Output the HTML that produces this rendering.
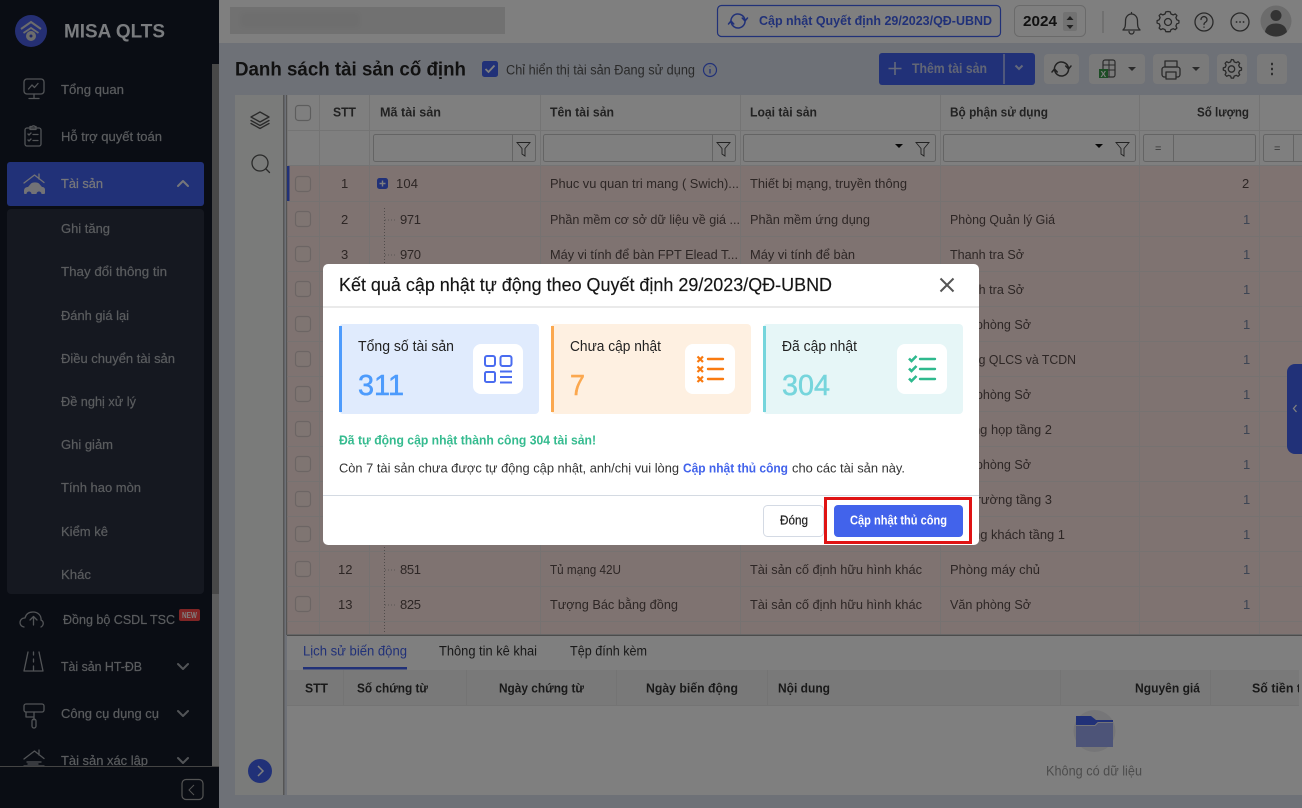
<!DOCTYPE html>
<html><head><meta charset="utf-8"><style>
html,body{margin:0;padding:0;background:#808080;width:1302px;height:808px;overflow:hidden}
svg{display:block;font-family:"Liberation Sans","DejaVu Sans",sans-serif}
.s{font-size:13px;fill:#b4b8bd;stroke:#b4b8bd;stroke-width:.2}
.h{font-size:13px;font-weight:bold;fill:#444}
.t{font-size:13px;fill:#5a4c4a}
.q{fill:#7a8aa8;font-size:13px}
.d{fill:none;stroke:#555;stroke-width:1.3;stroke-linecap:round;stroke-linejoin:round}
.b{fill:none;stroke:#a4a8ae;stroke-width:1.3;stroke-linecap:round;stroke-linejoin:round}
.l{stroke:#ece4e2;stroke-width:1}
.g{stroke:#e8e8e8;stroke-width:1}
.cb{fill:#fff;fill-opacity:.12;stroke:#d8cac8;stroke-width:1.2}
.f{fill:#fff;stroke:#c8c8c8;stroke-width:1}
.m{font-size:13px;fill:#333}
.c{font-size:14.5px;fill:#222}
</style></head><body>
<svg width="1302" height="808" viewBox="0 0 1302 808" xmlns="http://www.w3.org/2000/svg">
<defs><clipPath id="cs"><rect x="0" y="0" width="212" height="766"/></clipPath><filter id="bl"><feGaussianBlur stdDeviation="2"/></filter></defs>
<!-- page -->
<rect width="1302" height="808" fill="#dde2ee"/>
<rect x="219" width="1083" height="43" fill="#fff"/>
<rect x="230" y="7" width="275" height="27" fill="#e3e3e3"/>
<rect x="240" y="12" width="120" height="16" fill="#ddd" filter="url(#bl)"/>
<!-- top bar -->
<rect x="717.500" y="5.500" width="283" height="31" rx="4" fill="#fff" stroke="#4262f0" stroke-width="1.2"/>
<g transform="translate(738,21)" fill="none" stroke="#4262f0" stroke-width="1.500" stroke-linecap="round" stroke-linejoin="round"><path d="M-7 1A7 7 0 0 1 6.900-1M4.200-3L7 0l2.500-3"/><path d="M7-1A7 7 0 0 1-6.900 1M-4.200 3L-7 0l-2.500 3"/></g>
<text x="759" y="25" textLength="233" lengthAdjust="spacingAndGlyphs" font-size="13" font-weight="bold" fill="#4262f0">Cập nhật Quyết định 29/2023/QĐ-UBND</text>
<rect x="1014.500" y="5.500" width="71" height="31" rx="5" fill="#fff" stroke="#d4d4d4"/>
<text x="1023" y="26" textLength="34" lengthAdjust="spacingAndGlyphs" font-size="15" font-weight="bold" fill="#222">2024</text>
<rect x="1063" y="12" width="14" height="19" rx="2" fill="#e4e4e4"/>
<path d="M1070 16l3.500 4h-7zM1070 29l3.500-4h-7z" fill="#444"/>
<rect x="1102.500" y="11" width="1" height="22" fill="#c4c4c4"/>
<g class="d"><path d="M1123 30h17c-2-2-2.500-3-2.500-9 0-4-2.500-7-6-7s-6 3-6 7c0 6-.5 7-2.500 9zM1129 31.500a2.500 2.500 0 0 0 5 0M1131.500 14v-1.500"/>
<path d="M1168 12.500l2.200.4.8 2.100 2.200.9 2-1 1.700 1.700-1 2 .9 2.200 2.100.8v2.400l-2.100.8-.9 2.200 1 2-1.700 1.700-2-1-2.200.9-.8 2.100h-2.400" transform="translate(0,-1)"/><path d="M1168 12l-2.200.4-.8 2.100-2.200.9-2-1-1.700 1.700 1 2-.9 2.200-2.100.8v2.400l2.100.8.9 2.200-1 2 1.700 1.700 2-1 2.200.9.8 2.100h2.400" transform="translate(0,-.5)"/><circle cx="1168" cy="22" r="3.500"/>
<circle cx="1204" cy="22" r="9"/><path d="M1201 19.500a3 3 0 1 1 4.500 2.700c-1 .6-1.500 1.100-1.500 2.300M1204 27v.3"/>
<circle cx="1240" cy="22" r="9"/><path d="M1236.500 22h.1M1240 22h.1M1243.500 22h.1" stroke-width="1.800"/></g>
<circle cx="1276" cy="21" r="15.500" fill="#d8d8d8"/><circle cx="1276" cy="15.500" r="5.500" fill="#666"/><path d="M1265 32c1-6 5-8.500 11-8.500s10 2.500 11 8.500a15.500 15.500 0 0 1-22 0z" fill="#666"/>
<!-- toolbar -->
<text x="235" y="75.500" textLength="231" lengthAdjust="spacingAndGlyphs" font-size="19.500" font-weight="bold" fill="#222">Danh sách tài sản cố định</text>
<rect x="482" y="61" width="16" height="16" rx="2.500" fill="#4262f0"/><path d="M485.500 69l3 3 6-6.500" fill="none" stroke="#fff" stroke-width="1.800"/>
<text x="506" y="74.500" textLength="189" lengthAdjust="spacingAndGlyphs" font-size="13.500" fill="#555">Chỉ hiển thị tài sản Đang sử dụng</text>
<circle cx="710" cy="70" r="6.500" fill="none" stroke="#4262f0" stroke-width="1.200"/><path d="M710 69v4.500M710 66.500v.5" stroke="#4262f0" stroke-width="1.300"/>
<rect x="879" y="53" width="156" height="32" rx="3" fill="#4262f0"/><rect x="1003.500" y="54" width="1" height="30" fill="#fff"/>
<path d="M895 62v13M888.500 68.500h13" stroke="#c8d2f4" stroke-width="1.600"/>
<text x="912" y="73" textLength="75" lengthAdjust="spacingAndGlyphs" font-size="13.500" font-weight="bold" fill="#c4ccea">Thêm tài sản</text>
<path d="M1015.500 65.500l3.500 3.500 3.500-3.500" fill="none" stroke="#c8d2f4" stroke-width="2"/>
<g fill="#f4f4f4"><rect x="1044" y="54" width="35" height="30" rx="4"/><rect x="1089" y="54" width="56" height="30" rx="4"/><rect x="1153" y="54" width="56" height="30" rx="4"/><rect x="1217" y="54" width="30" height="30" rx="4"/><rect x="1257" y="54" width="30" height="30" rx="4"/></g>
<g transform="translate(1061.500,69)" fill="none" stroke="#444" stroke-width="1.500" stroke-linecap="round" stroke-linejoin="round"><path d="M-7 1A7 7 0 0 1 6.900-1M4.200-3L7 0l2.500-3"/><path d="M7-1A7 7 0 0 1-6.900 1M-4.200 3L-7 0l-2.500 3"/></g>
<g class="d">
<rect x="1162" y="67" width="18" height="10" rx="2.500"/><rect x="1165" y="61" width="12" height="6"/><rect x="1166" y="72" width="10" height="7" fill="#f4f4f4"/>
<path d="M1231.500 59.500l2 .4.700 2 2 .8 1.900-1 1.600 1.600-1 1.900.8 2 2 .7v2.200l-2 .7-.8 2 1 1.900-1.600 1.600-1.900-1-2 .8-.7 2h-2.200l-.7-2-2-.8-1.900 1-1.600-1.600 1-1.900-.8-2-2-.7v-2.200l2-.7.8-2-1-1.900 1.600-1.600 1.900 1 2-.8.7-2z"/><circle cx="1231.500" cy="69" r="3.200"/></g>
<path d="M1272 63.500v1M1272 68.500v1M1272 73.500v1" stroke="#444" stroke-width="1.800" stroke-linecap="round"/>
<rect x="1103" y="60" width="12" height="17" rx="2" fill="none" stroke="#555" stroke-width="1.200"/><path d="M1103 65h12M1103 70h12M1109 60v17" stroke="#555"/><rect x="1099" y="69" width="9" height="9" fill="#3a9a4a"/><text x="1100.500" y="77" font-size="8.500" font-weight="bold" fill="#fff">X</text>
<path d="M1128 67h8l-4 4zM1192 67h8l-4 4z" fill="#555"/>
<!-- left tool panel -->
<rect x="235" y="95" width="48" height="700" fill="#f4f6f4"/>
<rect x="283" y="95" width="1.500" height="700" fill="#aaa"/>
<g class="d"><path d="M260 112l9 5-9 5-9-5z"/><path d="M251 120.500l9 5 9-5M251 123.500l9 5 9-5"/><circle cx="260" cy="163" r="8"/><path d="M266 169l3.500 3.500"/></g>
<circle cx="260" cy="771" r="12" fill="#4262f0"/><path d="M258 766l5 5-5 5" fill="none" stroke="#fff" stroke-width="1.500"/>
<!-- grid -->
<rect x="287" y="95" width="1015" height="71" fill="#fff"/>
<rect x="287" y="166" width="1015" height="468" fill="#ffe7e2"/>
<rect x="286" y="95" width="1.200" height="540" fill="#aaa"/>
<rect x="287" y="166" width="2.500" height="36" fill="#4262f0"/>
<path class="g" d="M287 130.500h1015M287 165.500h1015"/>
<path class="l" d="M287 201.500h1015M287 236.500h1015M287 271.500h1015M287 306.500h1015M287 341.500h1015M287 376.500h1015M287 411.500h1015M287 446.500h1015M287 481.500h1015M287 516.500h1015M287 551.500h1015M287 586.500h1015M287 621.500h1015"/>
<path class="g" d="M319.500 95v71M369.500 95v71M540.500 95v71M740.500 95v71M940.500 95v71M1139.500 95v71M1259.500 95v71"/>
<path class="l" d="M319.500 166v468M369.500 166v468M540.500 166v468M740.500 166v468M940.500 166v468M1139.500 166v468M1259.500 166v468"/>
<rect x="295.500" y="105.500" width="15" height="15" rx="3" fill="#fff" stroke="#bbb" stroke-width="1.200"/>
<rect class="cb" x="295.500" y="176.500" width="15" height="15" rx="3"/><rect class="cb" x="295.500" y="211.500" width="15" height="15" rx="3"/><rect class="cb" x="295.500" y="246.500" width="15" height="15" rx="3"/><rect class="cb" x="295.500" y="281.500" width="15" height="15" rx="3"/><rect class="cb" x="295.500" y="316.500" width="15" height="15" rx="3"/><rect class="cb" x="295.500" y="351.500" width="15" height="15" rx="3"/><rect class="cb" x="295.500" y="386.500" width="15" height="15" rx="3"/><rect class="cb" x="295.500" y="421.500" width="15" height="15" rx="3"/><rect class="cb" x="295.500" y="456.500" width="15" height="15" rx="3"/><rect class="cb" x="295.500" y="491.500" width="15" height="15" rx="3"/><rect class="cb" x="295.500" y="526.500" width="15" height="15" rx="3"/><rect class="cb" x="295.500" y="561.500" width="15" height="15" rx="3"/><rect class="cb" x="295.500" y="596.500" width="15" height="15" rx="3"/>
<text class="h" x="333" y="116.500" textLength="23" lengthAdjust="spacingAndGlyphs">STT</text>
<text class="h" x="380" y="116.500" textLength="61" lengthAdjust="spacingAndGlyphs">Mã tài sản</text>
<text class="h" x="550" y="116.500" textLength="64" lengthAdjust="spacingAndGlyphs">Tên tài sản</text>
<text class="h" x="750" y="116.500" textLength="67" lengthAdjust="spacingAndGlyphs">Loại tài sản</text>
<text class="h" x="950" y="116.500" textLength="98" lengthAdjust="spacingAndGlyphs">Bộ phận sử dụng</text>
<text class="h" x="1197" y="116.500" textLength="52" lengthAdjust="spacingAndGlyphs">Số lượng</text>
<!-- filters -->
<rect class="f" x="373.500" y="134.500" width="162" height="27" rx="2"/><path d="M512.500 135v26" stroke="#c8c8c8"/>
<rect class="f" x="543.500" y="134.500" width="192" height="27" rx="2"/><path d="M712.500 135v26" stroke="#c8c8c8"/>
<rect class="f" x="743.500" y="134.500" width="192" height="27" rx="2"/>
<rect class="f" x="943.500" y="134.500" width="192" height="27" rx="2"/>
<rect class="f" x="1143.500" y="134.500" width="112" height="27" rx="2"/><path d="M1173.500 135v26" stroke="#c8c8c8"/>
<rect class="f" x="1263.500" y="134.500" width="60" height="27" rx="2"/><path d="M1293.500 135v26" stroke="#c8c8c8"/>
<g fill="none" stroke="#444" stroke-width=".9"><path d="M517 142.500h13l-5 6v7.500l-3-2v-5.500z"/><path d="M717 142.500h13l-5 6v7.500l-3-2v-5.500z"/><path d="M916 142.500h13l-5 6v7.500l-3-2v-5.500z"/><path d="M1116 142.500h13l-5 6v7.500l-3-2v-5.500z"/></g>
<path d="M895 144h8l-4 4zM1095 144h8l-4 4z" fill="#111"/>
<text x="1155" y="152" font-size="11" fill="#666">=</text><text x="1274" y="152" font-size="11" fill="#666">=</text>
<!-- tree -->
<rect x="377" y="178" width="11" height="11" rx="2.500" fill="#4262f0"/><path d="M379.500 183.500h6M382.500 180.500v6" stroke="#fff" stroke-width="1.400"/>
<path d="M384.500 208v426" stroke="#a09694" stroke-dasharray="1 2"/>
<path d="M385 220h11M385 255h11M385 570h11M385 605h11" stroke="#b4aaa8" stroke-dasharray="1 2"/>
<!-- rows -->
<g class="t">
<text x="341" y="188">1</text><text x="396" y="188" textLength="22">104</text><text x="550" y="188" textLength="189" lengthAdjust="spacingAndGlyphs">Phuc vu quan tri mang ( Swich)...</text><text x="750" y="188" textLength="157" lengthAdjust="spacingAndGlyphs">Thiết bị mạng, truyền thông</text>
<text x="341" y="224">2</text><text x="400" y="224" textLength="21">971</text><text x="550" y="224" textLength="190" lengthAdjust="spacingAndGlyphs">Phần mềm cơ sở dữ liệu về giá ...</text><text x="750" y="224" textLength="120" lengthAdjust="spacingAndGlyphs">Phần mềm ứng dụng</text><text x="950" y="224" textLength="105" lengthAdjust="spacingAndGlyphs">Phòng Quản lý Giá</text>
<text x="341" y="259">3</text><text x="400" y="259" textLength="21">970</text><text x="550" y="259" textLength="188" lengthAdjust="spacingAndGlyphs">Máy vi tính để bàn FPT Elead T...</text><text x="750" y="259" textLength="105" lengthAdjust="spacingAndGlyphs">Máy vi tính để bàn</text><text x="950" y="259" textLength="74" lengthAdjust="spacingAndGlyphs">Thanh tra Sở</text>
<text x="950" y="294" textLength="74" lengthAdjust="spacingAndGlyphs">Thanh tra Sở</text>
<text x="950" y="329" textLength="81" lengthAdjust="spacingAndGlyphs">Văn phòng Sở</text>
<text x="950" y="364" textLength="126" lengthAdjust="spacingAndGlyphs">Phòng QLCS và TCDN</text>
<text x="950" y="399" textLength="81" lengthAdjust="spacingAndGlyphs">Văn phòng Sở</text>
<text x="950" y="434" textLength="102" lengthAdjust="spacingAndGlyphs">Phòng họp tầng 2</text>
<text x="950" y="469" textLength="81" lengthAdjust="spacingAndGlyphs">Văn phòng Sở</text>
<text x="950" y="504" textLength="102" lengthAdjust="spacingAndGlyphs">Hội trường tầng 3</text>
<text x="950" y="539" textLength="115" lengthAdjust="spacingAndGlyphs">Phòng khách tầng 1</text>
<text x="338" y="574">12</text><text x="400" y="574" textLength="21">851</text><text x="550" y="574" textLength="71" lengthAdjust="spacingAndGlyphs">Tủ mạng 42U</text><text x="750" y="574" textLength="172" lengthAdjust="spacingAndGlyphs">Tài sản cố định hữu hình khác</text><text x="950" y="574" textLength="90" lengthAdjust="spacingAndGlyphs">Phòng máy chủ</text>
<text x="338" y="609">13</text><text x="400" y="609" textLength="21">825</text><text x="550" y="609" textLength="128" lengthAdjust="spacingAndGlyphs">Tượng Bác bằng đồng</text><text x="750" y="609" textLength="172" lengthAdjust="spacingAndGlyphs">Tài sản cố định hữu hình khác</text><text x="950" y="609" textLength="81" lengthAdjust="spacingAndGlyphs">Văn phòng Sở</text>
<text x="1242" y="188">2</text>
</g>
<g class="q">
<text x="1243" y="224">1</text><text x="1243" y="259">1</text><text x="1243" y="294">1</text><text x="1243" y="329">1</text><text x="1243" y="364">1</text><text x="1243" y="399">1</text><text x="1243" y="434">1</text><text x="1243" y="469">1</text><text x="1243" y="504">1</text><text x="1243" y="539">1</text><text x="1243" y="574">1</text><text x="1243" y="609">1</text>
</g>
<!-- bottom panel -->
<rect x="287" y="634" width="1015" height="161" fill="#fff"/>
<rect x="287" y="634.500" width="1015" height="1.500" fill="#999"/>
<rect x="287" y="670" width="1015" height="35" fill="#f2f2f2"/>
<path class="g" d="M287 705.500h1015M343.500 670v35M466.500 670v35M616.500 670v35M767.500 670v35M1060.500 670v35M1210.500 670v35"/>
<rect x="303" y="667" width="104" height="2.500" fill="#4262f0"/>
<text x="303" y="655.500" textLength="104" lengthAdjust="spacingAndGlyphs" font-size="13.500" fill="#4262f0">Lịch sử biến động</text>
<text x="439" y="655.500" textLength="98" lengthAdjust="spacingAndGlyphs" font-size="13.500" fill="#333">Thông tin kê khai</text>
<text x="570" y="655.500" textLength="77" lengthAdjust="spacingAndGlyphs" font-size="13.500" fill="#333">Tệp đính kèm</text>
<g class="h" style="fill:#333"><text x="305" y="692.500" textLength="23" lengthAdjust="spacingAndGlyphs">STT</text><text x="357" y="692.500" textLength="71" lengthAdjust="spacingAndGlyphs">Số chứng từ</text><text x="499" y="692.500" textLength="85" lengthAdjust="spacingAndGlyphs">Ngày chứng từ</text><text x="646" y="692.500" textLength="92" lengthAdjust="spacingAndGlyphs">Ngày biến động</text><text x="778" y="692.500" textLength="52" lengthAdjust="spacingAndGlyphs">Nội dung</text><text x="1135" y="692.500" textLength="65" lengthAdjust="spacingAndGlyphs">Nguyên giá</text><text x="1252" y="692.500" textLength="49" lengthAdjust="spacingAndGlyphs">Số tiền t</text></g>
<circle cx="1094.500" cy="731" r="21" fill="#ececf0"/>
<path d="M1076 716h15l5 4h17v27h-37z" fill="#4262f0"/><path d="M1076 725h19l3-3h15v25h-37z" fill="#9aa8f0"/>
<path d="M1076 725.500h19l3-3h15" fill="none" stroke="#e8e8f0"/>
<text x="1046" y="775.500" textLength="96" lengthAdjust="spacingAndGlyphs" font-size="13.500" fill="#999">Không có dữ liệu</text>
<rect x="1299" y="636" width="3" height="159" fill="#fff"/>
<path d="M1302 364h-7a8 8 0 0 0-8 8v74a8 8 0 0 0 8 8h7z" fill="#4262f0"/><path d="M1296.500 405l-3 3.500 3 3.500" fill="none" stroke="#fff" stroke-width="1.300"/>
<!-- sidebar -->
<rect width="219" height="808" fill="#141a28"/>
<rect x="212" y="64" width="7" height="530" fill="#909090"/><rect x="212" y="594" width="7" height="172" fill="#bcbcbc"/>
<rect x="7" y="209" width="197" height="385" rx="4" fill="#2a3040"/>
<rect x="7" y="162" width="197" height="44" rx="3" fill="#4262f0"/>
<circle cx="31" cy="31" r="16" fill="#4a5ee6"/>
<path d="M21 29l10-7 10 7" fill="none" stroke="#d8d8d8" stroke-width="2"/><path d="M23.500 33l7.500-5 7.500 5" fill="none" stroke="#d8d8d8" stroke-width="1.800"/><circle cx="31" cy="36" r="5" fill="#d8d8d8"/><circle cx="31" cy="36" r="1.500" fill="#3f4ec8"/>
<text x="64" y="37.500" textLength="101" lengthAdjust="spacingAndGlyphs" font-size="19" font-weight="bold" fill="#f4f8ff">MISA QLTS</text>
<g clip-path="url(#cs)">
<g class="s">
<text x="61" y="94" textLength="63" lengthAdjust="spacingAndGlyphs">Tổng quan</text>
<text x="61" y="141" textLength="101" lengthAdjust="spacingAndGlyphs">Hỗ trợ quyết toán</text>
<text x="61" y="188" textLength="42" lengthAdjust="spacingAndGlyphs" style="fill:#ececf4;stroke:#ececf4">Tài sản</text>
<text x="61" y="233" textLength="49" lengthAdjust="spacingAndGlyphs">Ghi tăng</text>
<text x="61" y="276" textLength="106" lengthAdjust="spacingAndGlyphs">Thay đổi thông tin</text>
<text x="61" y="320" textLength="68" lengthAdjust="spacingAndGlyphs">Đánh giá lại</text>
<text x="61" y="363" textLength="114" lengthAdjust="spacingAndGlyphs">Điều chuyển tài sản</text>
<text x="61" y="406" textLength="75" lengthAdjust="spacingAndGlyphs">Đề nghị xử lý</text>
<text x="61" y="449" textLength="52" lengthAdjust="spacingAndGlyphs">Ghi giảm</text>
<text x="61" y="492" textLength="80" lengthAdjust="spacingAndGlyphs">Tính hao mòn</text>
<text x="61" y="536" textLength="47" lengthAdjust="spacingAndGlyphs">Kiểm kê</text>
<text x="61" y="579" textLength="30" lengthAdjust="spacingAndGlyphs">Khác</text>
<text x="63" y="624" textLength="112" lengthAdjust="spacingAndGlyphs">Đồng bộ CSDL TSC</text>
<text x="61" y="671" textLength="81" lengthAdjust="spacingAndGlyphs">Tài sản HT-ĐB</text>
<text x="61" y="718" textLength="98" lengthAdjust="spacingAndGlyphs">Công cụ dụng cụ</text>
<text x="61" y="765" textLength="87" lengthAdjust="spacingAndGlyphs">Tài sản xác lập</text>
</g>
<g class="b">
<rect x="24" y="79" width="20" height="15" rx="3"/><path d="M34 94v4M29 98.500h10M28.500 89l3.500-4 2.500 2.500 3.500-4"/>
<rect x="25" y="128" width="16" height="18" rx="2"/><path d="M30 128v-1.500h2a2 2 0 0 1 3 0h1v3h-6zM28 134l1 1 2-2M28 140l1 1 2-2M33 134.500h5M33 140.500h5"/>
<path d="M24 183l10.500-8 9.500 7.500M39 174v5" style="stroke:#e4e4ec"/>
<path d="M24 627a4.500 4.500 0 0 1 1-9c1-4 4-6 8-6 5 0 8.500 3.500 8 8 3 1.500 3 5 0 7M37 620l-3.500-3.500L30 620M33.500 616.500V625"/>
<path d="M28 657l-4 19h19l-4-19" transform="translate(0,-5)"/><path d="M33.500 652v3M33.500 659v3M33.500 666v4"/>
<rect x="24" y="704" width="20" height="8" rx="2"/><path d="M34 712v5h-8v-5M34 717v3"/><rect x="32" y="719" width="4" height="9" rx="2"/>
<path d="M24 759l10.500-8 9.500 7.500M39 750v5M28 764l10 0M24 766l20 0M27 762l14 0"/>
<path d="M178 186l5-5 5 5" style="stroke:#ececf4;stroke-width:2"/>
<path d="M178 664l5 5 5-5M178 711l5 5 5-5M178 758l5 5 5-5" stroke-width="2"/>
</g>
<path d="M24 191c0-3 2-4 4-4l3-3.500c2-1.500 6-1.500 8 0l3 3.500c2 0 3 1 3 3v3c0 1-1 1-2 1H25c-1 0-1-1-1-3z" fill="#e4e4ec"/><circle cx="29" cy="194" r="2.500" fill="#4262f0"/><circle cx="39" cy="194" r="2.500" fill="#4262f0"/>
</g>
<rect x="179" y="609" width="21" height="12" rx="2" fill="#ff4a4a"/><text x="182" y="618" textLength="15" lengthAdjust="spacingAndGlyphs" font-size="8" font-weight="bold" fill="#fff">NEW</text>
<rect y="766" width="219" height="42" fill="#141a28"/><rect y="766" width="219" height="1" fill="#888"/>
<rect x="182" y="779.500" width="21" height="20" rx="4" fill="none" stroke="#a8a8a8" stroke-width="1.200"/><path d="M194 785l-5 5 5 5" fill="none" stroke="#a8a8a8"/>
<!-- overlay -->
<rect width="1302" height="808" fill="#000" opacity=".5"/>
<!-- modal -->
<rect x="323" y="264" width="656" height="281" rx="5" fill="#fff"/>
<path d="M323 307h656" stroke="#d4d4d4"/>
<text x="339" y="291" textLength="493" lengthAdjust="spacingAndGlyphs" font-size="18" fill="#151515" stroke="#151515" stroke-width=".15">Kết quả cập nhật tự động theo Quyết định 29/2023/QĐ-UBND</text>
<path d="M940.500 278.500l13 13M953.500 278.500l-13 13" stroke="#555" stroke-width="2" fill="none"/>
<rect x="339" y="324" width="200" height="90" rx="4" fill="#e0ebfd"/><rect x="339" y="326" width="3" height="86" fill="#4d9bfc"/>
<rect x="551" y="324" width="200" height="90" rx="4" fill="#fef0e1"/><rect x="551" y="326" width="3" height="86" fill="#fba84f"/>
<rect x="763" y="324" width="200" height="90" rx="4" fill="#e6f6f7"/><rect x="763" y="326" width="3" height="86" fill="#76d5dc"/>
<text class="c" x="358" y="351" textLength="96" lengthAdjust="spacingAndGlyphs">Tổng số tài sản</text>
<text class="c" x="570" y="351" textLength="91" lengthAdjust="spacingAndGlyphs">Chưa cập nhật</text>
<text class="c" x="782" y="351" textLength="75" lengthAdjust="spacingAndGlyphs">Đã cập nhật</text>
<g font-size="29" stroke-width=".5"><text x="358" y="395" textLength="46" lengthAdjust="spacingAndGlyphs" fill="#4d9bfc" stroke="#4d9bfc">311</text>
<text x="570" y="395" textLength="15" lengthAdjust="spacingAndGlyphs" fill="#fba84f" stroke="#fba84f">7</text>
<text x="782" y="395" textLength="48" lengthAdjust="spacingAndGlyphs" fill="#76d5dc" stroke="#76d5dc">304</text></g>
<rect x="473" y="344" width="50" height="50" rx="8" fill="#fff"/><rect x="685" y="344" width="50" height="50" rx="8" fill="#fff"/><rect x="897" y="344" width="50" height="50" rx="8" fill="#fff"/>
<g fill="none" stroke="#4a6cf0" stroke-width="2"><rect x="485" y="356" width="10" height="10" rx="2"/><rect x="500.500" y="356" width="11" height="10" rx="2"/><rect x="485" y="372" width="10" height="10" rx="1.500"/><path d="M500 371.500h12M500 377h12M500 382.500h12"/></g>
<path d="M708 359h15M708 369h15M708 379h15" stroke="#f97a10" stroke-width="2.400" stroke-linecap="round"/><path d="M697.500 356.500l5.500 5.500M703 356.500l-5.500 5.500M697.500 366.500l5.500 5.500M703 366.500l-5.500 5.500M697.500 376.500l5.500 5.500M703 376.500l-5.500 5.500" stroke="#f97a10" stroke-width="2.200" fill="none"/>
<path d="M920 359h15M920 369h15M920 379h15" stroke="#2fb98e" stroke-width="2.400" stroke-linecap="round"/><path d="M909 358.500l2.500 2.500 5-5M909 368.500l2.500 2.500 5-5M909 378.500l2.500 2.500 5-5" stroke="#2fb98e" stroke-width="2.600" fill="none"/>
<text x="339" y="444.500" textLength="257" lengthAdjust="spacingAndGlyphs" font-size="13" font-weight="bold" fill="#35bb8f">Đã tự động cập nhật thành công 304 tài sản!</text>
<text class="m" x="339" y="472.500" textLength="340" lengthAdjust="spacingAndGlyphs">Còn 7 tài sản chưa được tự động cập nhật, anh/chị vui lòng</text>
<text x="683" y="472.500" textLength="105" lengthAdjust="spacingAndGlyphs" font-size="13" font-weight="bold" fill="#4263eb">Cập nhật thủ công</text>
<text class="m" x="792" y="472.500" textLength="113" lengthAdjust="spacingAndGlyphs">cho các tài sản này.</text>
<path d="M323 495.500h656" stroke="#d4dae2"/>
<rect x="763.500" y="505.500" width="60" height="31" rx="4" fill="#fff" stroke="#d4dae4"/>
<text x="780" y="524.500" textLength="28" lengthAdjust="spacingAndGlyphs" font-size="13" fill="#222" stroke="#222" stroke-width=".2">Đóng</text>
<rect x="825.500" y="498.500" width="145" height="44" fill="none" stroke="#df1414" stroke-width="3"/>
<rect x="834" y="505" width="129" height="32" rx="4" fill="#4263eb"/>
<text x="850" y="524.500" textLength="97" lengthAdjust="spacingAndGlyphs" font-size="13" font-weight="bold" fill="#fff">Cập nhật thủ công</text>
</svg>
</body></html>
